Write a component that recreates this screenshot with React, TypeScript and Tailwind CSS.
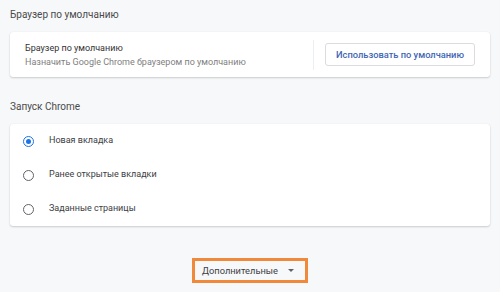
import React from "react";

function Radio({ checked }: { checked?: boolean }) {
  return (
    <div
      className={
        "w-[11px] h-[11px] rounded-full border-[1.5px] flex items-center justify-center " +
        (checked ? "border-[#1a73e8]" : "border-[#5f6368]")
      }
    >
      {checked && <div className="w-[5px] h-[5px] rounded-full bg-[#1a73e8]" />}
    </div>
  );
}

function Row({ label, checked }: { label: string; checked?: boolean }) {
  return (
    <div className="h-[34px] flex items-center pl-[13px]">
      <Radio checked={checked} />
      <span className="ml-[15px] text-[9px] text-[#3c4043]">{label}</span>
    </div>
  );
}

export default function App() {
  return (
    <div
      className="w-[500px] h-[292px] bg-[#f7f8fa] px-[10px] overflow-hidden flex flex-col"
      style={{ fontFamily: "Roboto, 'Noto Sans', sans-serif" }}
    >
      <div className="h-[32px] flex items-start pt-[7px] text-[10px] text-[#4a4a4a]">
        Браузер по умолчанию
      </div>
      <div className="h-[45px] bg-white rounded-[3px] shadow-[0_1px_2px_rgba(0,0,0,0.18),0_0_1px_rgba(0,0,0,0.08)] flex items-center pl-[15px] pr-[15px]">
        <div className="flex-1 flex flex-col">
          <span className="text-[9px] leading-[14px] text-[#333]">Браузер по умолчанию</span>
          <span className="text-[9px] leading-[14px] text-[#808080]">
            Назначить Google Chrome браузером по умолчанию
          </span>
        </div>
        <div className="w-px h-[30px] bg-[#eceff1] mr-[11px]" />
        <div className="w-[150px] h-[23px] border border-[#dadce0] rounded-[3px] flex items-center justify-center text-[9.3px] text-[#3f66b4] font-medium">
          Использовать по умолчанию
        </div>
      </div>
      <div className="h-[47px] flex items-start pt-[22px] text-[10px] text-[#4a4a4a]">
        Запуск Chrome
      </div>
      <div className="h-[102px] bg-white rounded-[3px] shadow-[0_1px_2px_rgba(0,0,0,0.18),0_0_1px_rgba(0,0,0,0.08)] flex flex-col">
        <Row label="Новая вкладка" checked />
        <Row label="Ранее открытые вкладки" />
        <Row label="Заданные страницы" />
      </div>
      <div className="flex justify-center pt-[32px]">
        <div className="w-[116px] h-[25px] border-[3px] border-[#f08a3a] flex items-center pl-[7px] pr-[10px]">
          <span className="flex-1 text-[9.3px] text-[#3c4043]">Дополнительные</span>
          <svg width="8" height="5" viewBox="0 0 8 5">
            <path d="M1 1 L4 4 L7 1 Z" fill="#5f6368" />
          </svg>
        </div>
      </div>
    </div>
  );
}
